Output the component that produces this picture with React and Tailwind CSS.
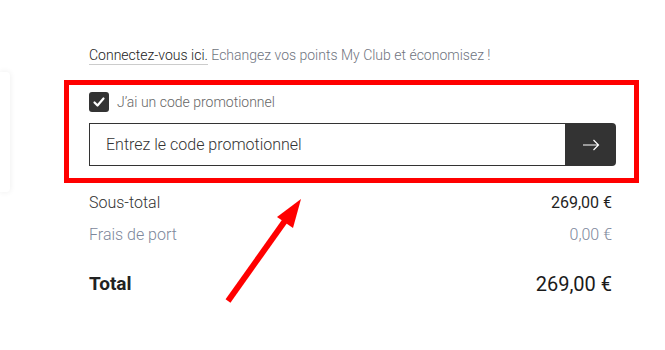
import React from 'react';

function CheckIcon() {
    return (
        <svg viewBox="0 0 20 20" className="w-[20px] h-[20px]">
            <path d="M5.5 10.5l3 3 6-7" fill="none" stroke="#fff" strokeWidth="2.2" strokeLinecap="round" strokeLinejoin="round" />
        </svg>
    );
}

function ThinArrow() {
    return (
        <svg viewBox="0 0 18 12" className="w-[18px] h-[12px]">
            <path d="M1 6h15.5M11.5 1l5 5-5 5" fill="none" stroke="#fff" strokeWidth="1.2" />
        </svg>
    );
}

function SummaryRow({ label, value, muted }) {
    return (
        <div className="flex items-center justify-between h-[24px]">
            <span className={`text-[16px] font-light ${muted ? 'text-[#7d879b]' : 'text-[#333]'}`}>{label}</span>
            <span className={muted ? 'text-[16px] font-light text-[#7d879b]' : 'text-[16px] font-normal text-[#1f1f1f]'}>{value}</span>
        </div>
    );
}

export default function App() {
    return (
        <div className="relative w-[665px] h-[350px] bg-white overflow-hidden flex" style={{ fontFamily: 'Roboto, "Liberation Sans", sans-serif' }}>
            {/* edge of a card cut off on the left */}
            <div className="w-[10px] h-[120px] mt-[72px] bg-white rounded-r shadow-[0_0_6px_rgba(0,0,0,0.08)] shrink-0"></div>

            <div className="ml-[79px] w-[527px] pt-[45px]">
                <p className="text-[14px] leading-[20px] font-light text-[#6f7480]">
                    <a className="text-[#222] border-b border-[#ccc] pb-[1px]">Connectez-vous ici.</a> Echangez vos points My Club et économisez !
                </p>

                <div className="mt-[15px] -ml-[25px] -mr-[23px] border-[5px] border-[#ff0000] pl-[20px] pr-[18px] pt-[7px] pb-[12px]">
                    <label className="flex items-center gap-[8px] h-[20px]">
                        <span className="w-[20px] h-[20px] rounded-[3px] bg-[#333] flex items-center justify-center">
                            <CheckIcon />
                        </span>
                        <span className="text-[14px] font-light text-[#666]">J’ai un code promotionnel</span>
                    </label>
                    <div className="mt-[11px] flex h-[43px]">
                        <div className="flex-1 border border-[#333] border-r-0 flex items-center pl-[16px] text-[16px] font-light text-[#333]">
                            Entrez le code promotionnel
                        </div>
                        <button className="w-[51px] bg-[#333] rounded-r-[4px] flex items-center justify-center">
                            <ThinArrow />
                        </button>
                    </div>
                </div>

                <div className="mt-[8px] flex flex-col gap-[8px] pr-[4px]">
                    <SummaryRow label="Sous-total" value="269,00 €" />
                    <SummaryRow label="Frais de port" value="0,00 €" muted />
                </div>
                <div className="mt-[23px] flex items-center justify-between h-[28px] pr-[4px]">
                    <span className="text-[19px] font-bold text-[#222]">Total</span>
                    <span className="text-[20px] font-normal text-[#1a1a1a]">269,00 €</span>
                </div>
            </div>

            {/* red annotation arrow */}
            <svg className="absolute left-0 top-0 w-[665px] h-[350px] pointer-events-none" viewBox="0 0 665 350">
                <line x1="228" y1="301" x2="287" y2="218" stroke="#ff0000" strokeWidth="6" />
                <polygon points="301,199 277,217 293,228" fill="#ff0000" />
            </svg>
        </div>
    );
}
